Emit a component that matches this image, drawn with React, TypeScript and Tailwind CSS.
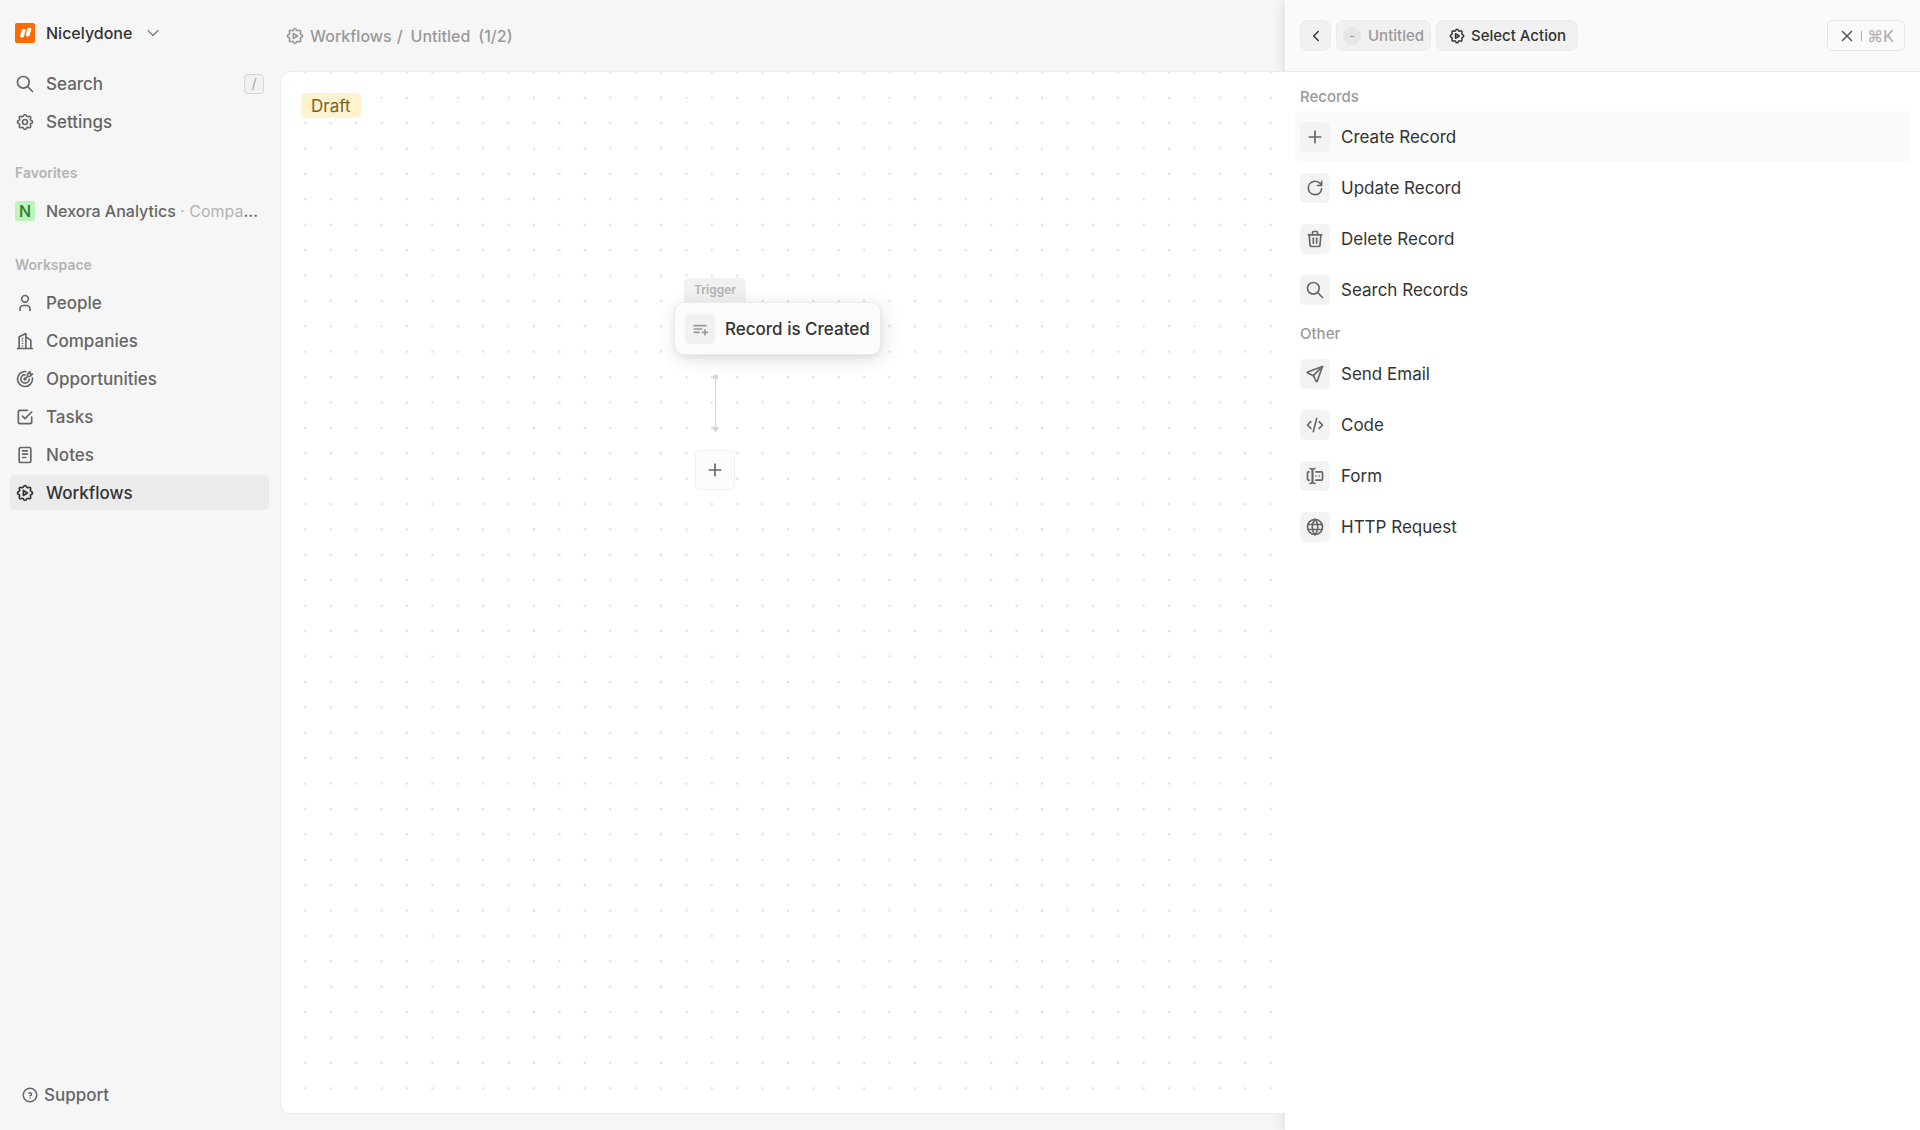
import type { ReactNode } from 'react';
import type { IconType } from 'react-icons';
import {
  TbBuildingSkyscraper,
  TbCheckbox,
  TbChevronDown,
  TbChevronLeft,
  TbCode,
  TbForms,
  TbHelpCircle,
  TbNotes,
  TbPlaylistAdd,
  TbPlus,
  TbReload,
  TbSearch,
  TbSend,
  TbSettings,
  TbSettingsAutomation,
  TbTargetArrow,
  TbTrash,
  TbUser,
  TbWorld,
  TbX,
} from 'react-icons/tb';

type Item = { icon: IconType; label: string };

const workspace: Item[] = [
  { icon: TbUser, label: 'People' },
  { icon: TbBuildingSkyscraper, label: 'Companies' },
  { icon: TbTargetArrow, label: 'Opportunities' },
  { icon: TbCheckbox, label: 'Tasks' },
  { icon: TbNotes, label: 'Notes' },
  { icon: TbSettingsAutomation, label: 'Workflows' },
];

const recordActions: Item[] = [
  { icon: TbPlus, label: 'Create Record' },
  { icon: TbReload, label: 'Update Record' },
  { icon: TbTrash, label: 'Delete Record' },
  { icon: TbSearch, label: 'Search Records' },
];

const otherActions: Item[] = [
  { icon: TbSend, label: 'Send Email' },
  { icon: TbCode, label: 'Code' },
  { icon: TbForms, label: 'Form' },
  { icon: TbWorld, label: 'HTTP Request' },
];

function Logo() {
  return (
    <svg viewBox="0 0 20 20" className="size-5 shrink-0" aria-hidden="true">
      <rect width="20" height="20" rx="2" fill="#ff6a00" />
      <path
        d="M8.1 7.400h1.100L7.600 13H6.500z M13.700 6.200h1.200L13.300 12h-1.200z"
        fill="#fff"
        stroke="#fff"
        strokeWidth="2.800"
        strokeLinejoin="round"
      />
    </svg>
  );
}

function NavItem({ icon: Icon, label, active, children }: Item & { active?: boolean; children?: ReactNode }) {
  return (
    <a
      href="#"
      className={
        active
          ? 'flex h-[35px] items-center gap-[11px] rounded-[5px] bg-[#ebebeb] px-[5px] text-[#333333]'
          : 'flex h-[35px] items-center gap-[11px] rounded-[5px] px-[5px] text-[#666666]'
      }
    >
      <Icon className="size-5 shrink-0" />
      <span className="flex-1">{label}</span>
      {children}
    </a>
  );
}

function NavTitle({ children }: { children: ReactNode }) {
  return (
    <h2 className="mt-5 mb-1.5 flex h-7 items-center px-[5px] text-[14px] font-semibold text-[#b3b3b3]">{children}</h2>
  );
}

function Sidebar() {
  return (
    <nav className="flex w-[269px] shrink-0 flex-col pl-2.5 font-medium">
      <button type="button" className="mt-[15px] flex h-[35px] items-center gap-[11px] px-[5px] text-[16px] text-[#333333]">
        <Logo />
        <span>Nicelydone</span>
        <TbChevronDown className="size-5 stroke-[1.6] text-[#808080]" />
      </button>

      <div className="mt-4 flex flex-col gap-[3px]">
        <NavItem icon={TbSearch} label="Search">
          <kbd className="flex size-5 items-center justify-center rounded-[4px] border border-[#d6d6d6] bg-[#f1f1f1] font-[Inter] text-[14px] text-[#b3b3b3]">
            /
          </kbd>
        </NavItem>
        <NavItem icon={TbSettings} label="Settings" />
      </div>

      <NavTitle>Favorites</NavTitle>
      <div className="flex flex-col pb-[3px]">
        <a href="#" className="flex h-[35px] items-center gap-[11px] px-[5px] text-[16px] text-[#666666]">
          <span className="flex size-5 shrink-0 items-center justify-center rounded-[2px] bg-[#bbf5bb] text-[#2a7a2a]">
            N
          </span>
          <span className="min-w-0 truncate">
            Nexora Analytics <span className="font-normal text-[#b3b3b3]">· Compa</span>...
          </span>
        </a>
      </div>

      <NavTitle>Workspace</NavTitle>
      <div className="flex flex-col gap-[3px]">
        {workspace.map((item) => (
          <NavItem key={item.label} {...item} active={item.label === 'Workflows'} />
        ))}
      </div>

      <a href="#" className="mt-auto mb-[18px] flex h-[34px] items-center gap-[5px] px-[11px] text-[#666666]">
        <TbHelpCircle className="size-[18px]" />
        Support
      </a>
    </nav>
  );
}

function Canvas() {
  return (
    <div className="relative flex-1 overflow-hidden rounded-l-[10px] border border-r-0 border-[#ebebeb] bg-white">
      <svg className="absolute inset-0 size-full" aria-hidden="true">
        <defs>
          <pattern id="dots" x="11.7" y="-12.4" width="25.4" height="25.4" patternUnits="userSpaceOnUse">
            <circle cx="12.7" cy="12.7" r="1.2" fill="#dedede" />
          </pattern>
        </defs>
        <rect width="100%" height="100%" fill="url(#dots)" />
      </svg>

      <span className="absolute top-[21px] left-5 flex h-[25px] items-center rounded-[4px] bg-[#fef2cf] px-2.5 text-[#7a6223]">
        Draft
      </span>

      <div className="absolute top-[206px] left-[393px] flex flex-col items-start font-medium">
        <span className="ml-2.5 flex h-6 items-center rounded-t-[5px] bg-[#f1f1f1] px-2.5 text-[12px] font-semibold text-[#b3b3b3]">
          Trigger
        </span>
        <div className="flex h-[53px] items-center gap-2.5 rounded-[10px] border border-[#ebebeb] bg-[#fcfcfc] px-2.5 text-[#333333] shadow-[2px_4px_20px_rgba(0,0,0,0.12),0_3px_5px_rgba(0,0,0,0.05)]">
          <span className="flex size-[30px] items-center justify-center rounded-[5px] bg-[#f1f1f1] text-[#999999]">
            <TbPlaylistAdd className="size-5" />
          </span>
          Record is Created
        </div>
      </div>

      <svg viewBox="0 0 10 60" className="absolute top-[302px] left-[429px] h-[60px] w-2.5" aria-hidden="true">
        <path d="M5.5 3v52" stroke="#d6d6d6" strokeWidth="1.2" />
        <circle cx="5.5" cy="3" r="2.6" fill="#d6d6d6" />
        <path d="M2.3 53h6.4v1.2L5.5 58.2 2.3 54.2z" fill="#d6d6d6" />
      </svg>

      <button
        type="button"
        aria-label="Add step"
        className="absolute top-[378px] left-[414px] flex size-10 items-center justify-center rounded-[4px] border border-[#f0f0f0] bg-[#fcfcfc] text-[#666666]"
      >
        <TbPlus className="size-5" />
      </button>
    </div>
  );
}

function ActionGroup({ title, items, selected }: { title: string; items: Item[]; selected?: string }) {
  return (
    <section>
      <h2 className="flex h-7 items-center px-[5px] text-[15px] font-medium text-[#999999]">{title}</h2>
      {items.map(({ icon: Icon, label }) => (
        <button
          key={label}
          type="button"
          className={
            label === selected
              ? 'flex h-[51px] w-full items-center gap-[11px] rounded-[5px] bg-[#fafafa] px-[5px]'
              : 'flex h-[51px] w-full items-center gap-[11px] rounded-[5px] px-[5px]'
          }
        >
          <span className="flex size-[30px] items-center justify-center rounded-[5px] bg-[#f3f3f3] text-[#666666]">
            <Icon className="size-5" />
          </span>
          {label}
        </button>
      ))}
    </section>
  );
}

function SidePanel() {
  return (
    <aside className="flex w-[635px] shrink-0 flex-col bg-white text-[#333333] shadow-[0_0_12px_rgba(0,0,0,0.14)]">
      <header className="flex h-[72px] items-center gap-[5px] border-b border-[#ebebeb] bg-[#fafafa] px-[15px] text-[15px] font-medium">
        <button
          type="button"
          aria-label="Back"
          className="flex size-[31px] items-center justify-center rounded-[8px] border border-[#ebebeb] bg-[#f1f1f1]"
        >
          <TbChevronLeft className="size-[18px]" />
        </button>
        <button
          type="button"
          className="flex h-[31px] items-center gap-[7px] rounded-[8px] border border-[#ebebeb] bg-[#f1f1f1] px-1.5 text-[#999999]"
        >
          <span className="flex size-[18px] items-center justify-center rounded-full bg-[#e6e6e6] text-[12px]">-</span>
          Untitled
        </button>
        <button
          type="button"
          className="flex h-[31px] items-center gap-[5px] rounded-[8px] border border-[#ebebeb] bg-[#f1f1f1] px-[11px]"
        >
          <TbSettingsAutomation className="size-[18px]" />
          Select Action
        </button>
        <button
          type="button"
          aria-label="Close"
          className="ml-auto flex h-[31px] items-center gap-[5px] rounded-[5px] border border-[#e6e6e6] px-2.5 text-[16px] text-[#b3b3b3]"
        >
          <TbX className="size-[18px] text-[#555555]" />
          <span className="h-2.5 w-px bg-[#b3b3b3]" />
          ⌘K
        </button>
      </header>

      <div className="flex flex-col gap-[5px] px-2.5 pt-[11px]">
        <ActionGroup title="Records" items={recordActions} selected="Create Record" />
        <ActionGroup title="Other" items={otherActions} />
      </div>
    </aside>
  );
}

export default function App() {
  return (
    <div className="flex h-screen overflow-hidden bg-[#f6f6f6] font-[Inter,sans-serif] text-[17px] leading-6">
      <Sidebar />
      <main className="flex min-w-0 flex-1 flex-col pb-4 pl-[11px]">
        <header className="flex h-[71px] shrink-0 items-center gap-[5px] px-[5px] text-[16px] font-medium text-[#999999]">
          <TbSettingsAutomation className="size-5" />
          <span>Workflows</span>
          <span>/</span>
          <span className="pl-[3px]">Untitled</span>
          <span className="pl-[3px]">(1/2)</span>
        </header>
        <Canvas />
      </main>
      <SidePanel />
    </div>
  );
}
